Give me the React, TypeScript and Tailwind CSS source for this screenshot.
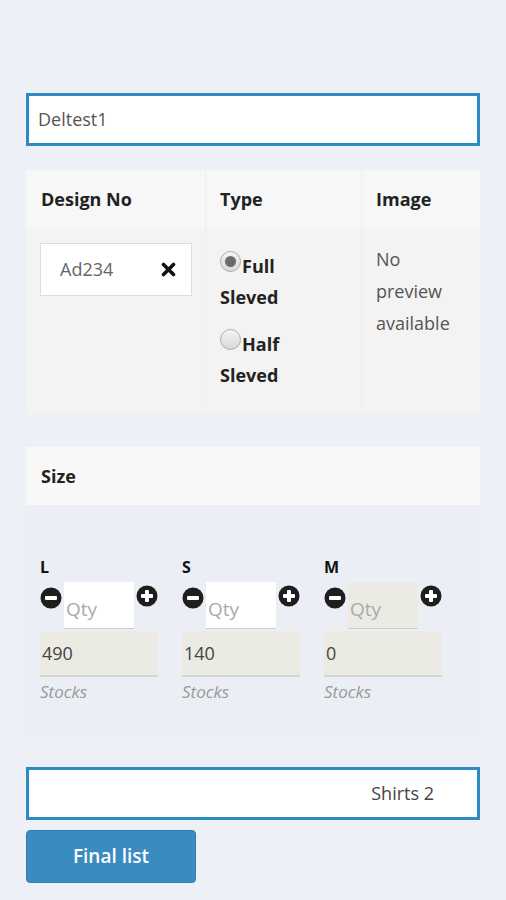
import React from "react";

const font = { fontFamily: "'Open Sans', Lato, sans-serif" };

function CircleIcon({ plus }: { plus?: boolean }) {
  return (
    <svg width="22" height="22" viewBox="0 0 22 22" className="shrink-0">
      <circle cx="11" cy="11" r="10.5" fill="#1e1e1e" />
      <rect x="5" y="9" width="12" height="4" rx="1" fill="#fff" />
      {plus && <rect x="9" y="5" width="4" height="12" rx="1" fill="#fff" />}
    </svg>
  );
}

function Radio({ checked }: { checked?: boolean }) {
  return (
    <span className="flex h-[21px] w-[21px] shrink-0 items-center justify-center rounded-full border border-[#aaa] bg-gradient-to-b from-[#f4f4f4] to-[#d9d9d9]">
      {checked && <span className="h-[11px] w-[11px] rounded-full bg-[#6b6b6b]" />}
    </span>
  );
}

const sizes = [
  { name: "L", stock: "490", disabled: false },
  { name: "S", stock: "140", disabled: false },
  { name: "M", stock: "0", disabled: true },
];

export default function App() {
  return (
    <div className="min-h-[900px] bg-[#edf0f7] px-[26px] pt-[93px] text-[#333]" style={font}>
      <div className="flex h-[53px] items-center border-[3px] border-[#2d8bc2] bg-white px-[9px] text-[18px] text-[#555]">
        Deltest1
      </div>

      {/* design table */}
      <div className="mt-[24px] grid grid-cols-[179px_156px_1fr] bg-[#f3f3f3]">
        <div className="flex h-[58px] items-center bg-[#f7f7f7] pl-[15px] text-[18px] font-bold text-[#222]">Design No</div>
        <div className="flex h-[58px] items-center border-l border-[#eeeeee] bg-[#f7f7f7] pl-[14px] text-[18px] font-bold text-[#222]">Type</div>
        <div className="flex h-[58px] items-center border-l border-[#eeeeee] bg-[#f7f7f7] pl-[14px] text-[18px] font-bold text-[#222]">Image</div>

        <div className="h-[186px] pl-[14px] pt-[15px]">
          <div className="flex h-[53px] w-[152px] items-center justify-between border border-[#ddd] bg-white pl-[19px] pr-[15px] text-[18px] text-[#666]">
            Ad234
            <svg width="15" height="15" viewBox="0 0 15 15">
              <path d="M2.5 2.5 L12.5 12.5 M12.5 2.5 L2.5 12.5" stroke="#111" strokeWidth="3.6" strokeLinecap="round" />
            </svg>
          </div>
        </div>
        <div className="border-l border-[#eeeeee] pl-[14px] pt-[23px] text-[18px] font-bold leading-[31px] text-[#222]">
          <div className="flex items-start">
            <Radio checked />
            <span className="ml-[1px]">Full</span>
          </div>
          <div>Sleved</div>
          <div className="mt-[16px] flex items-start">
            <Radio />
            <span className="ml-[1px]">Half</span>
          </div>
          <div>Sleved</div>
        </div>
        <div className="border-l border-[#eeeeee] pl-[14px] pt-[15px] text-[18px] leading-[32px] text-[#555]">
          No
          <br />
          preview
          <br />
          available
        </div>
      </div>

      {/* size block */}
      <div className="mt-[33px]">
        <div className="flex h-[58px] items-center bg-[#f8f8f8] pl-[15px] text-[18px] font-bold text-[#222]">Size</div>
        <div className="flex h-[230px] bg-[#ebeef5] pl-[14px] pt-[52px]">
          {sizes.map((s) => (
            <div key={s.name} className="w-[142px]">
              <div className="text-[16px] font-bold leading-[20px] text-[#111]">{s.name}</div>
              <div className="mt-[5px] flex items-start">
                <div className="mt-[5px]">
                  <CircleIcon />
                </div>
                <div
                  className={`ml-[2px] flex h-[47px] w-[70px] items-end border-b border-[#ccc] pb-[5px] pl-[2px] text-[19px] text-[#aaa] ${
                    s.disabled ? "bg-[#ebebe4]" : "bg-white"
                  }`}
                >
                  Qty
                </div>
                <div className="ml-[2px] mt-[3px]">
                  <CircleIcon plus />
                </div>
              </div>
              <div className="mt-[2px] flex h-[46px] w-[118px] items-center border-b-2 border-[#d6d6cf] bg-[#ebebe4] pl-[2px] text-[18px] text-[#444]">
                {s.stock}
              </div>
              <div className="mt-[2px] text-[17px] italic text-[#999]">Stocks</div>
            </div>
          ))}
        </div>
      </div>

      <div className="mt-[32px] flex h-[53px] items-center justify-end border-[3px] border-[#2d8bc2] bg-white pr-[43px] text-[18px] text-[#444]">
        Shirts 2
      </div>

      <button className="mt-[10px] flex h-[53px] w-[170px] items-center justify-center rounded-[4px] border border-[#2f7fb0] bg-[#3a8bbf] text-[19px] font-semibold text-white">
        Final list
      </button>
    </div>
  );
}
